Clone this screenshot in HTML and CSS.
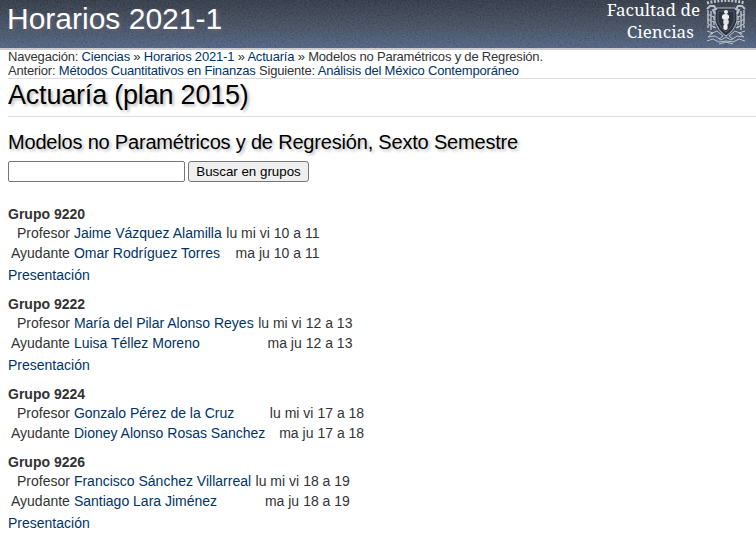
FILE: index.html
```html
<!DOCTYPE html>
<html lang="es">
<head>
<meta charset="utf-8">
<title>Horarios 2021-1</title>
<link rel="stylesheet" href="styles.css">
</head>
<body>
<header class="banner">
  <svg class="grain" width="756" height="48" aria-hidden="true">
    <filter id="noise" x="0" y="0" width="100%" height="100%">
      <feTurbulence type="fractalNoise" baseFrequency="0.6" numOctaves="2" seed="4"/>
      <feColorMatrix values="0.9 0 0 0 -0.15  0.9 0 0 0 -0.13  0.9 0 0 0 -0.08  0 0 0 0 0.15"/>
    </filter>
    <rect width="756" height="48" filter="url(#noise)"/>
  </svg>
  <div class="site-title">Horarios 2021-1</div>
  <div class="brand">
    <div class="faculty"><div>Facultad de</div><div class="second">Ciencias</div></div>
    <svg class="crest" viewBox="0 0 42 46" fill="none" stroke="#b9c0ca" aria-hidden="true">
      <path d="M2 3Q21 -2 40 3" stroke-width="3" stroke-dasharray="2 1.5"/>
      <path d="M12 8H30L32 10V21Q29 31 21 36Q13 31 10 21V10Z" fill="#2c3442" stroke-width="1"/>
      <path d="M13 11H29V21Q27 28 21 32Q15 28 13 21Z" stroke-width=".6" opacity=".5"/>
      <circle cx="21" cy="12" r="2" fill="#eef0f3" stroke="none"/>
      <ellipse cx="20.5" cy="17" rx="3.6" ry="3" fill="#eef0f3" stroke="none"/>
      <ellipse cx="21" cy="22" rx="2.8" ry="3" fill="#dfe3e8" stroke="none"/>
      <ellipse cx="20.5" cy="27" rx="2.2" ry="3" fill="#eef0f3" stroke="none"/>
      <path d="M2 9L5 6H9L11 9L8 10L10 14M40 9L37 6H33L31 9L34 10L32 14" stroke-width="2"/>
      <path d="M3 10V28M6 11V30M9 16V28M39 10V28M36 11V30M33 16V28" stroke-width="1.4" stroke-dasharray="4 1"/>
      <path d="M2 14L9 17M2 19L9 22M3 24L11 28M40 14L33 17M40 19L33 22M39 24L31 28" stroke-width="1.2"/>
      <path d="M2 31L8 33L3 37L10 36L16 40L21 37L26 40L32 36L39 37L34 33L40 31M5 34L12 31L18 36L14 39M37 34L30 31L24 36L28 39M2 41L8 39L14 42L21 41L28 42L34 39L40 41M14 44L21 42L28 44" stroke-width="1"/>
    </svg>
  </div>
</header>
<main>
  <nav class="crumbs">
    <div class="trail">Navegación: <a>Ciencias</a> » <a>Horarios 2021-1</a> » <a>Actuaría</a> » Modelos no Paramétricos y de Regresión.</div>
    <div class="trail">Anterior: <a>Métodos Cuantitativos en Finanzas</a> Siguiente: <a>Análisis del México Contemporáneo</a></div>
  </nav>
  <h1>Actuaría (plan 2015)</h1>
  <h2>Modelos no Paramétricos y de Regresión, Sexto Semestre</h2>
  <form class="search"><input type="text"><button type="button">Buscar en grupos</button></form>

  <section class="group">
    <h3>Grupo 9220</h3>
    <table>
      <tr><td>Profesor</td><td><a>Jaime Vázquez Alamilla</a></td><td>lu mi vi</td><td>10 a 11</td></tr>
      <tr><td>Ayudante</td><td><a>Omar Rodríguez Torres</a></td><td>ma ju</td><td>10 a 11</td></tr>
    </table>
    <a class="intro">Presentación</a>
  </section>
  <section class="group">
    <h3>Grupo 9222</h3>
    <table>
      <tr><td>Profesor</td><td><a>María del Pilar Alonso Reyes</a></td><td>lu mi vi</td><td>12 a 13</td></tr>
      <tr><td>Ayudante</td><td><a>Luisa Téllez Moreno</a></td><td>ma ju</td><td>12 a 13</td></tr>
    </table>
    <a class="intro">Presentación</a>
  </section>
  <section class="group">
    <h3>Grupo 9224</h3>
    <table>
      <tr><td>Profesor</td><td><a>Gonzalo Pérez de la Cruz</a></td><td>lu mi vi</td><td>17 a 18</td></tr>
      <tr><td>Ayudante</td><td><a>Dioney Alonso Rosas Sanchez</a></td><td>ma ju</td><td>17 a 18</td></tr>
    </table>
  </section>
  <section class="group">
    <h3>Grupo 9226</h3>
    <table>
      <tr><td>Profesor</td><td><a>Francisco Sánchez Villarreal</a></td><td>lu mi vi</td><td>18 a 19</td></tr>
      <tr><td>Ayudante</td><td><a>Santiago Lara Jiménez</a></td><td>ma ju</td><td>18 a 19</td></tr>
    </table>
    <a class="intro">Presentación</a>
  </section>
</main>
</body>
</html>
```
FILE: styles.css
```css
* { box-sizing: border-box; }
html { overflow: hidden; }
body {
  margin: 0;
  background: #fff;
  color: #333;
  font: 14px/16px "Liberation Sans", Arial, sans-serif;
}
a { color: #036; }
.banner {
  position: relative;
  display: flex;
  justify-content: space-between;
  height: 50px;
  padding: 0 9px 0 7px;
  border-bottom: 2px solid #ccc;
  background: linear-gradient(#2b333f, #3d4859 50%, #4c5f83);
  overflow: hidden;
}
.grain { position: absolute; left: 0; top: 0; }
.site-title {
  position: relative;
  color: #fff;
  font-size: 30px;
  line-height: 37px;
  text-shadow: 2px 2px 4px #667;
}
.brand { position: relative; display: flex; gap: 5px; }
.faculty {
  color: #fff;
  font: 17px/20px "Noto Serif", "DejaVu Serif", serif;
  text-align: center;
}
.second { padding: 2px 0 0 14px; }
.crest { width: 42px; height: 46px; }
main { padding: 0 0 0 8px; }
.crumbs {
  height: 29px;
  border-bottom: 1px solid #ddd;
  font-size: 13px;
  line-height: 14px;
  letter-spacing: -0.19px;
}
.trail { white-space: nowrap; }
h1, h2, h3 { margin: 0; font-weight: normal; }
h1 {
  height: 38px;
  border-bottom: 1px solid #ddd;
  color: #000;
  font-size: 27px;
  line-height: 32px;
  letter-spacing: -0.2px;
  text-shadow: 2px 2px 3px #bbb;
}
h2 {
  margin-top: 13px;
  color: #000;
  font-size: 20px;
  line-height: 24px;
  letter-spacing: -0.19px;
  text-shadow: 2px 2px 3px #bbb;
}
.search { display: flex; gap: 3px; margin: 7px 0 24px; height: 21px; }
input {
  width: 177px;
  height: 21px;
  padding: 0;
  border: 1px solid #767676;
  border-radius: 2px;
}
button {
  width: 121px;
  height: 21px;
  padding: 0;
  border: 1px solid #767676;
  border-radius: 3px;
  background: #efefef;
  color: #000;
  font: 13.33px/17px "Liberation Sans", Arial, sans-serif;
}
.group { margin-bottom: 10px; }
h3 { font-size: 14px; font-weight: bold; line-height: 16px; }
table { border-spacing: 2px; }
td { padding: 1px; text-align: right; white-space: nowrap; }
td:nth-child(2) { padding-right: 1.5px; text-align: left; }
.intro { display: block; height: 22px; line-height: 22px; }
```
